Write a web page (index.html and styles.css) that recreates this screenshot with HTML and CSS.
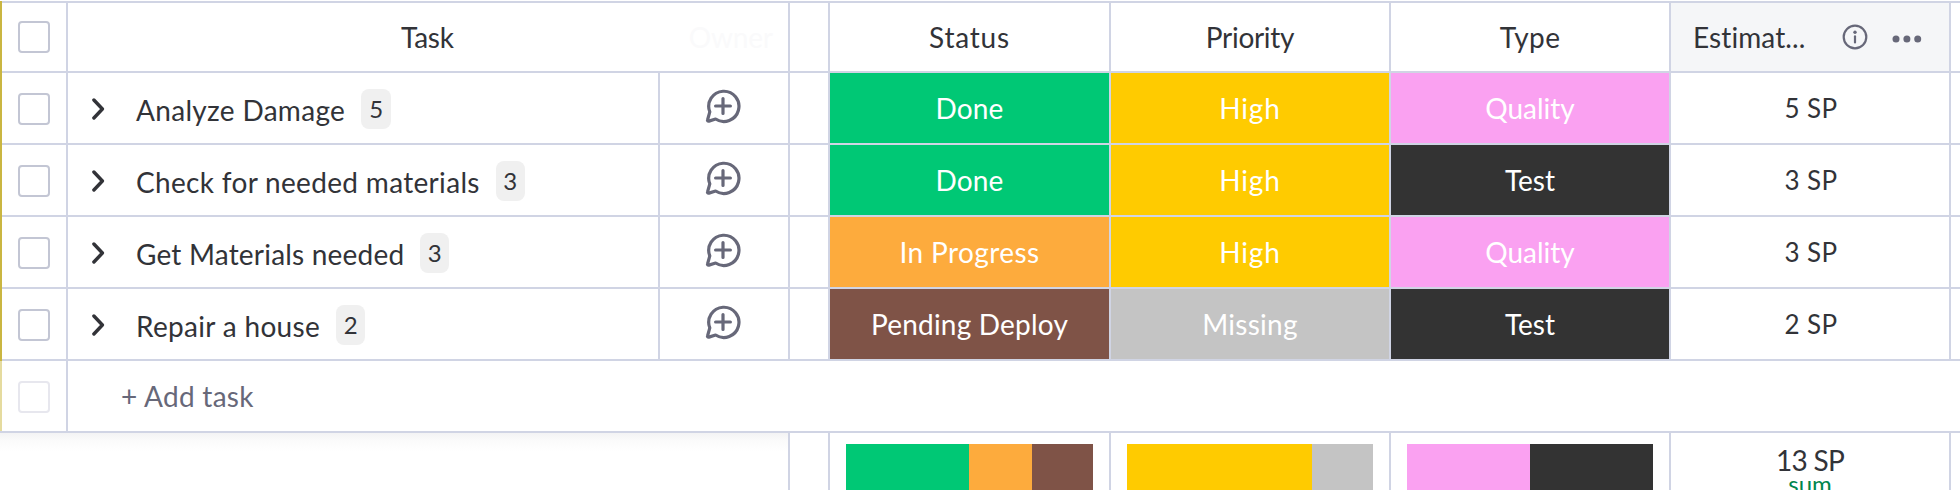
FILE: index.html
```html
<!DOCTYPE html>
<html lang="en">
<head>
<meta charset="utf-8">
<title>Tasks</title>
<link rel="stylesheet" href="styles.css">
</head>
<body>
<svg class="defs" aria-hidden="true">
  <symbol id="chevron" viewBox="0 0 14 22"><path d="M1.9 2 10.4 11 1.9 20"/></symbol>
  <symbol id="comment" viewBox="0 0 36 36"><path d="M4.8 23.9A15.1 15.1 0 1 1 10.6 31L3.9 33.1C2.9 33.4 2.2 32.6 2.6 31.8ZM18 10.6V25.4M10.6 18H25.4"/></symbol>
</svg>
<main class="board">
  <div class="row head">
    <div class="bar"></div>
    <div class="cell check"><span class="box"></span></div>
    <div class="cell task-head"><span class="tight">Task</span><span class="ghost tight">Owner</span></div>
    <div class="cell gap"></div>
    <div class="cell first"><span class="loose">Status</span></div>
    <div class="cell"><span class="tighter">Priority</span></div>
    <div class="cell"><span class="mid">Type</span></div>
    <div class="cell estimate">
      <span>Estimat...</span>
      <svg class="info" viewBox="0 0 26 26"><circle cx="13" cy="13" r="11.3"/><path d="M13 12.4V18.4"/><circle class="dot" cx="13" cy="8.3" r="1.7"/></svg>
      <svg class="more" viewBox="0 0 30 8"><circle cx="4" cy="4" r="3.5"/><circle cx="14.9" cy="4" r="3.5"/><circle cx="25.7" cy="4" r="3.5"/></svg>
    </div>
    <div class="cell rest"></div>
  </div>

  <div class="row">
    <div class="bar"></div>
    <div class="cell check"><span class="box"></span></div>
    <div class="cell name"><svg class="chevron"><use href="#chevron"/></svg><span class="title wide">Analyze Damage</span><span class="count five">5</span></div>
    <div class="cell talk"><svg class="comment"><use href="#comment"/></svg></div>
    <div class="cell gap"></div>
    <div class="cell first done"><span class="soft">Done</span></div>
    <div class="cell high"><span class="loose">High</span></div>
    <div class="cell quality"><span>Quality</span></div>
    <div class="cell points">5 SP</div>
    <div class="cell rest"></div>
  </div>

  <div class="row">
    <div class="bar"></div>
    <div class="cell check"><span class="box"></span></div>
    <div class="cell name"><svg class="chevron"><use href="#chevron"/></svg><span class="title wide">Check for needed materials</span><span class="count">3</span></div>
    <div class="cell talk"><svg class="comment"><use href="#comment"/></svg></div>
    <div class="cell gap"></div>
    <div class="cell first done"><span class="soft">Done</span></div>
    <div class="cell high"><span class="loose">High</span></div>
    <div class="cell test"><span>Test</span></div>
    <div class="cell points">3 SP</div>
    <div class="cell rest"></div>
  </div>

  <div class="row">
    <div class="bar"></div>
    <div class="cell check"><span class="box"></span></div>
    <div class="cell name"><svg class="chevron"><use href="#chevron"/></svg><span class="title soft">Get Materials needed</span><span class="count">3</span></div>
    <div class="cell talk"><svg class="comment"><use href="#comment"/></svg></div>
    <div class="cell gap"></div>
    <div class="cell first progress"><span class="mid">In Progress</span></div>
    <div class="cell high"><span class="loose">High</span></div>
    <div class="cell quality"><span>Quality</span></div>
    <div class="cell points">3 SP</div>
    <div class="cell rest"></div>
  </div>

  <div class="row">
    <div class="bar"></div>
    <div class="cell check"><span class="box"></span></div>
    <div class="cell name"><svg class="chevron"><use href="#chevron"/></svg><span class="title wide">Repair a house</span><span class="count">2</span></div>
    <div class="cell talk"><svg class="comment"><use href="#comment"/></svg></div>
    <div class="cell gap"></div>
    <div class="cell first pending"><span class="soft">Pending Deploy</span></div>
    <div class="cell missing"><span class="wide">Missing</span></div>
    <div class="cell test"><span>Test</span></div>
    <div class="cell points">2 SP</div>
    <div class="cell rest"></div>
  </div>

  <div class="row add">
    <div class="bar pale"></div>
    <div class="cell check"><span class="box faint"></span></div>
    <div class="cell add-text"><span class="wide">+ Add task</span></div>
  </div>

  <div class="row summary">
    <div class="cell shade"></div>
    <div class="cell gap"></div>
    <div class="cell first stack"><i class="done" style="flex-grow:123"></i><i class="progress" style="flex-grow:63"></i><i class="pending" style="flex-grow:61"></i></div>
    <div class="cell stack"><i class="high" style="flex-grow:185"></i><i class="missing" style="flex-grow:61"></i></div>
    <div class="cell stack"><i class="quality" style="flex-grow:123"></i><i class="test" style="flex-grow:123"></i></div>
    <div class="cell total"><span class="sum-value">13 SP</span><span class="sum-label">sum</span></div>
    <div class="cell rest"></div>
  </div>
</main>
</body>
</html>
```
FILE: styles.css
```css
* { box-sizing: border-box; }
html, body { margin: 0; height: 490px; overflow: hidden; background: #fff; }
body { font: 28px/34px Lato, "Open Sans", sans-serif; color: #323338; }
svg { fill: none; flex: none; }
.defs { position: absolute; width: 0; height: 0; }

.board { width: 1960px; height: 490px; padding-top: 1px; overflow: hidden; }
.row { display: flex; height: 72px; }
.cell {
  display: flex; align-items: center; justify-content: center; flex: none;
  width: 280px; padding-bottom: 1px;
  border-right: 2px solid #d0d4e4; border-bottom: 2px solid #d0d4e4;
  white-space: nowrap;
}
.head .cell { border-top: 2px solid #d0d4e4; }
.bar { flex: none; width: 2px; background: #cab641; }
.bar.pale { height: 70px; background: #e5db9f; }

.check { width: 66px; padding: 2px 0 0; }
.head .check { padding: 0; }
.box { width: 32px; height: 32px; border: 2px solid #c3c6d4; border-radius: 4px; }
.box.faint { border-color: #e7e7ee; }
.gap { width: 40px; }
.first { width: 281px; }
.rest { width: 9px; border-right: 0; }

.task-head { width: 722px; justify-content: flex-start; padding-left: 333px; }
.ghost { margin-left: 235px; color: #fafafb; }
.estimate { justify-content: flex-start; padding-left: 22px; background: #f5f6f8; }
.info { width: 26px; height: 26px; margin: 1px 0 0 35px; stroke: #676879; stroke-width: 2.2; stroke-linecap: round; }
.estimate span { width: 114px; letter-spacing: .1px; }
.info .dot { fill: #676879; stroke: none; }
.more { width: 30px; height: 8px; margin: 5px 0 0 24px; fill: #676879; }

.name { width: 592px; justify-content: flex-start; padding: 0 0 0 24px; }
.chevron { width: 14px; height: 22px; margin-top: 1px; stroke: #323338; stroke-width: 3.4; stroke-linecap: round; stroke-linejoin: round; }
.title { margin: 3px 0 0 30px; }
.title.wide { letter-spacing: .32px; }
.count {
  width: 29px; height: 40px; margin: 2px 0 0 16px; border-radius: 8px;
  background: #f0f0f0; font-size: 24px; line-height: 39px; text-align: center;
}
.count.five { width: 30px; }
.talk { width: 130px; padding: 0 3px 4px 0; }
.comment { width: 36px; height: 36px; stroke: #676879; stroke-width: 3.2; stroke-linecap: round; stroke-linejoin: round; }
.points { font-size: 26px; letter-spacing: .4px; padding: 0 0 0 2px; }

.done, .progress, .pending, .high, .missing, .quality, .test { color: #fff; }
.done { background: #00c875; }
.progress { background: #fdab3d; }
.pending { background: #7f5347; }
.high { background: #ffcb00; }
.missing { background: #c4c4c4; }
.quality { background: #faa1f1; }
.test { background: #333; }

.tighter { letter-spacing: -.3px; }
.tight { letter-spacing: -.2px; }
.soft { letter-spacing: .2px; }
.wide { letter-spacing: .28px; }
.mid { letter-spacing: .4px; }
.loose { letter-spacing: .8px; }

.add .add-text { width: 1892px; justify-content: flex-start; padding: 0 0 0 53px; border-right: 0; color: #676879; }

/* The pale accent bar stops above the closing rule of the table. */
.add { background: linear-gradient(#d0d4e4, #d0d4e4) 0 100% / 2px 2px no-repeat; }
.summary { height: 57px; }
.summary .cell { border-bottom: 0; }
.shade { width: 790px; background: linear-gradient(#f3f3f4, #fafafa 7px, #fff 18px) no-repeat; }
.stack { align-items: stretch; padding: 11px 16px 0; }
.stack i { flex: 1 1 0; }
.total { flex-direction: column; justify-content: flex-start; padding-top: 12px; }
.sum-value { letter-spacing: -.7px; line-height: 30px; }
.sum-label { font-size: 24px; line-height: 18px; color: #00854d; }
```
